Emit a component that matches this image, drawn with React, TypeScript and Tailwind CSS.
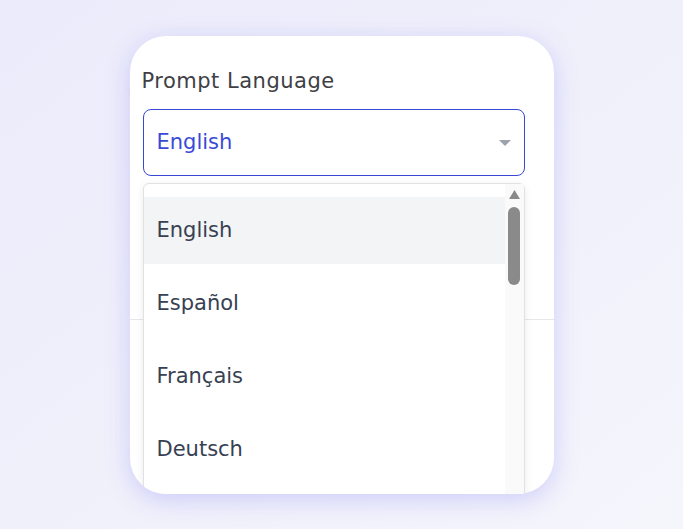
import React from 'react';

const languages = ['English', 'Español', 'Français', 'Deutsch'];

export default function App() {
  return (
    <div className="min-h-screen w-full bg-gradient-to-br from-[#ebebfb] via-[#f0f0fb] to-[#f5f5fc] flex justify-center pt-[36px] font-['DejaVu_Sans',sans-serif]">
      <div className="relative w-[424px] h-[458px] rounded-[36px] bg-white overflow-hidden shadow-[0_6px_24px_rgba(110,110,245,0.28)]">
        <div className="px-3 pt-[30px]">
          <label className="block text-[21px] leading-[30px] tracking-[0.5px] text-[#3f3f46]">Prompt Language</label>
          <div className="mt-[13px] h-[67px] w-[382px] ml-px rounded-lg border-[1.5px] border-[#3847d4] flex items-center justify-between pl-[13px] pr-[13px]">
            <span className="text-[21px] text-[#3a4ad6]">English</span>
            <svg width="12" height="7" viewBox="0 0 12 7" className="mt-[2px]">
              <path d="M0 0h12L6 6z" fill="#9ca3af" />
            </svg>
          </div>
        </div>
        <div className="mt-[143px] border-t border-[#e5e7eb]" />

        {/* open listbox */}
        <div className="absolute left-[13px] top-[147px] w-[382px] h-[340px] bg-white border border-[#e2e2e6] rounded-t-md shadow-[0_2px_8px_rgba(0,0,0,0.08)] flex">
          <ul className="flex-1 pt-[13px] flex flex-col gap-[6px]">
            {languages.map((lang, i) => (
              <li
                key={lang}
                className={
                  i === 0
                    ? 'shrink-0 h-[67px] flex items-center pl-[13px] bg-[#f3f4f6] text-[21px] text-[#374151]'
                    : 'shrink-0 h-[67px] flex items-center pl-[13px] text-[21px] text-[#374151]'
                }
              >
                {lang}
              </li>
            ))}
          </ul>
          <div className="w-[19px] bg-[#fafafa] flex flex-col items-center pt-[6px]">
            <svg width="11" height="9" viewBox="0 0 11 9">
              <path d="M5.5 0L11 9H0z" fill="#8a8a8a" />
            </svg>
            <div className="mt-[8px] w-[12px] h-[78px] rounded-full bg-[#8a8a8a]" />
          </div>
        </div>
      </div>
    </div>
  );
}
